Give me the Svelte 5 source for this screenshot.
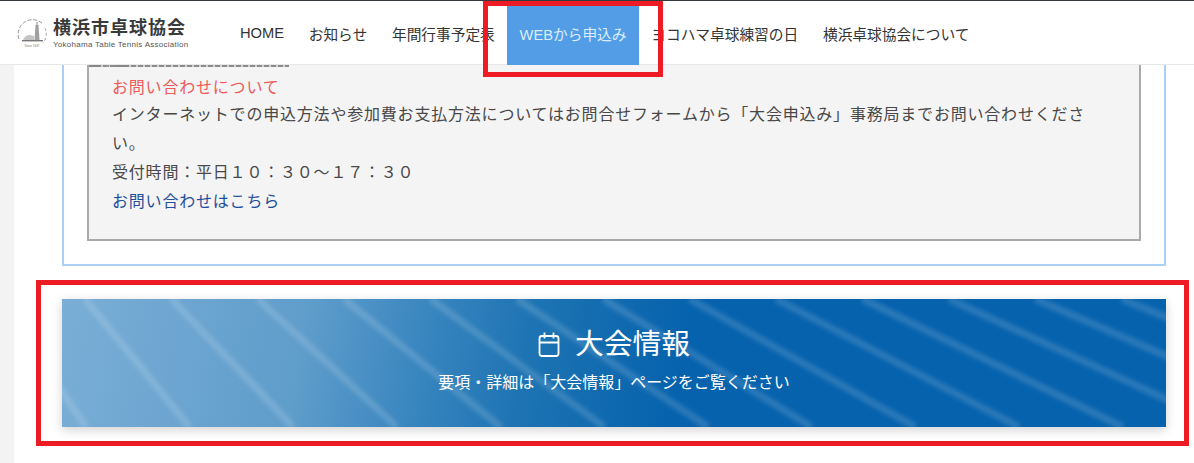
<script lang="ts">
  const navItems = [
    { label: "HOME" },
    { label: "お知らせ" },
    { label: "年間行事予定表" },
    { label: "WEBから申込み", active: true },
    { label: "ヨコハマ卓球練習の日" },
    { label: "横浜卓球協会について" }
  ];

  // sheen lines fan out: flatter towards the right edge of the banner
  const bannerW = 1104;
  const bannerH = 128;
  const stripes = Array.from({ length: 16 }, (_, i) => {
    const top = 23 + (i - 3) * 86.4;
    return { x1: top, x2: top + 100 + 0.2 * top };
  });
</script>

<div class="page">
  <header class="header">
    <div class="logo">
      <svg class="emblem" viewBox="0 0 32 32" width="32" height="32" aria-hidden="true">
        <path d="M3 22A14.5 14.5 0 0 1 27 7" fill="none" stroke="#888" stroke-width="0.9" stroke-dasharray="4 1.6" />
        <path d="M29 11A14.5 14.5 0 0 1 27 26" fill="none" stroke="#999" stroke-width="0.9" stroke-dasharray="3 2" />
        <path d="M19.5 8h3l1 15h-5z" fill="#a0a0a0" />
        <path d="M20.5 5h1v3h-1z" fill="#888" />
        <path d="M7 23q2-5 7-5l4 1v4z" fill="#c4c4c4" />
        <path d="M6 23h21v1.4H6z" fill="#777" />
        <text x="16" y="29.5" text-anchor="middle" class="emblem-text">Since 1947</text>
      </svg>
      <div class="logo-text">
        <span class="logo-ja">横浜市卓球協会</span>
        <span class="logo-en">Yokohama Table Tennis Association</span>
      </div>
    </div>
    <nav class="nav">
      {#each navItems as item}
        <a class="nav-item" class:active={item.active} href="#top">{item.label}</a>
      {/each}
    </nav>
  </header>

  <main class="content">
    <section class="frame">
      <div class="notice">
        <div class="cut-line"></div>
        <p class="notice-title">お問い合わせについて</p>
        <p>インターネットでの申込方法や参加費お支払方法についてはお問合せフォームから「大会申込み」事務局までお問い合わせください。</p>
        <p>受付時間：平日１０：３０～１７：３０</p>
        <a class="notice-link" href="#top">お問い合わせはこちら</a>
      </div>
    </section>

    <a class="banner" href="#top">
      <svg class="sheen" viewBox={`0 0 ${bannerW} ${bannerH}`} width={bannerW} height={bannerH} aria-hidden="true">
        <defs>
          <filter id="soft" x="-20%" y="-20%" width="140%" height="140%">
            <feGaussianBlur stdDeviation="2" />
          </filter>
        </defs>
        <g filter="url(#soft)" stroke="#fff" stroke-width="7" stroke-opacity="0.15">
          {#each stripes as s}
            <line x1={s.x1} y1="0" x2={s.x2} y2={bannerH} />
          {/each}
        </g>
      </svg>
      <div class="banner-title">
        <svg viewBox="0 0 22 25" width="22" height="25" fill="none" stroke="#fff" stroke-width="1.8" aria-hidden="true">
          <rect x="1.5" y="4" width="19" height="20" rx="2.5" />
          <path d="M1.5 10.5h19M6.5 0.5v6M15.5 0.5v6" />
        </svg>
        <span>大会情報</span>
      </div>
      <p class="banner-sub">要項・詳細は「大会情報」ページをご覧ください</p>
    </a>
  </main>

  <div class="mark mark-nav"></div>
  <div class="mark mark-banner"></div>
</div>

<style>
  :global(body) {
    margin: 0;
    background: #fff;
  }

  .page {
    position: relative;
    width: 1194px;
    height: 463px;
    overflow: hidden;
    font-family: "Liberation Sans", "Noto Sans CJK JP", sans-serif;
    color: #484848;
    background: #fff;
    border-top: 1px solid #343a3e;
    box-sizing: border-box;
  }

  .header {
    display: flex;
    align-items: center;
    height: 64px;
    padding-left: 16px;
    background: #fff;
    border-bottom: 1px solid #e8e8e8;
    box-sizing: border-box;
  }

  .logo {
    display: flex;
    align-items: center;
    gap: 5px;
    width: 211.5px;
    flex-shrink: 0;
  }

  .logo-text {
    display: flex;
    flex-direction: column;
    gap: 1px;
    padding-top: 2px;
  }

  .logo-ja {
    font-size: 18px;
    line-height: 22px;
    font-weight: 700;
    letter-spacing: 1px;
    color: #3a3a3a;
  }

  .logo-en {
    font-size: 8px;
    line-height: 10px;
    letter-spacing: 0.27px;
    color: #555;
    white-space: nowrap;
  }

  .emblem {
    flex-shrink: 0;
  }

  .emblem-text {
    font-size: 3px;
    fill: #777;
  }

  .nav {
    display: flex;
    align-self: stretch;
    margin-bottom: -1px;
  }

  .nav-item {
    display: flex;
    align-items: center;
    padding: 0 12.4px;
    font-size: 14.7px;
    color: #333;
    text-decoration: none;
    white-space: nowrap;
  }

  .nav-item.active {
    color: #dcecfb;
    background: #529de6;
  }

  .content {
    height: 398px;
    padding-left: 48px;
    background: #fff;
    border-left: 14px solid #f3f3f3;
  }

  .frame {
    width: 1104px;
    height: 201px;
    padding: 0 23px;
    border: 2px solid #aad0f7;
    border-top: 0;
    box-sizing: border-box;
  }

  .notice {
    height: 176px;
    padding: 0 23px;
    background: #f4f4f4;
    border: 2px solid #aaa;
    border-top: 0;
    box-sizing: border-box;
    font-size: 16px;
    line-height: 29px;
    letter-spacing: 0.8px;
  }

  .cut-line {
    width: 200px;
    height: 2px;
    margin: 0 0 7px -23px;
    background:
      linear-gradient(90deg, #888 0 10px, transparent 10px 17px, #999 17px 20px, transparent 20px 26px, #888 26px 40px, transparent 40px),
      repeating-linear-gradient(90deg, #8c8c8c 0 5px, #cfcfcf 5px 7px);
  }

  .notice p {
    margin: 0;
  }

  .notice .notice-title {
    padding-top: 1px;
    color: #ee5a5a;
    line-height: 25px;
  }

  .notice-link {
    color: #1f4f9a;
    text-decoration: none;
  }

  .banner {
    position: relative;
    display: flex;
    flex-direction: column;
    align-items: center;
    justify-content: center;
    width: 1104px;
    height: 128px;
    margin-top: 33px;
    padding-bottom: 7px;
    box-sizing: border-box;
    overflow: hidden;
    color: #fff;
    text-decoration: none;
    box-shadow: 0 3px 10px rgba(0, 0, 0, 0.18);
    background: linear-gradient(100deg, #7aaed6 0%, #5f9dcb 22%, #3885bf 33%, #1e74b3 42%, #0662ad 56%, #0662ad 100%);
  }

  .sheen {
    position: absolute;
    left: 0;
    top: 0;
  }

  .banner-title {
    position: relative;
    display: flex;
    align-items: center;
    gap: 15px;
    font-size: 28.75px;
    line-height: 38px;
  }

  .banner-sub {
    position: relative;
    margin: 9px 0 0;
    font-size: 16px;
    line-height: 22px;
  }

  .mark {
    position: absolute;
    border: 5px solid #ed1c24;
    box-sizing: border-box;
    pointer-events: none;
  }

  .mark-nav {
    left: 483px;
    top: 0;
    width: 180px;
    height: 76px;
  }

  .mark-banner {
    left: 36px;
    top: 279px;
    width: 1153px;
    height: 166px;
  }
</style>
